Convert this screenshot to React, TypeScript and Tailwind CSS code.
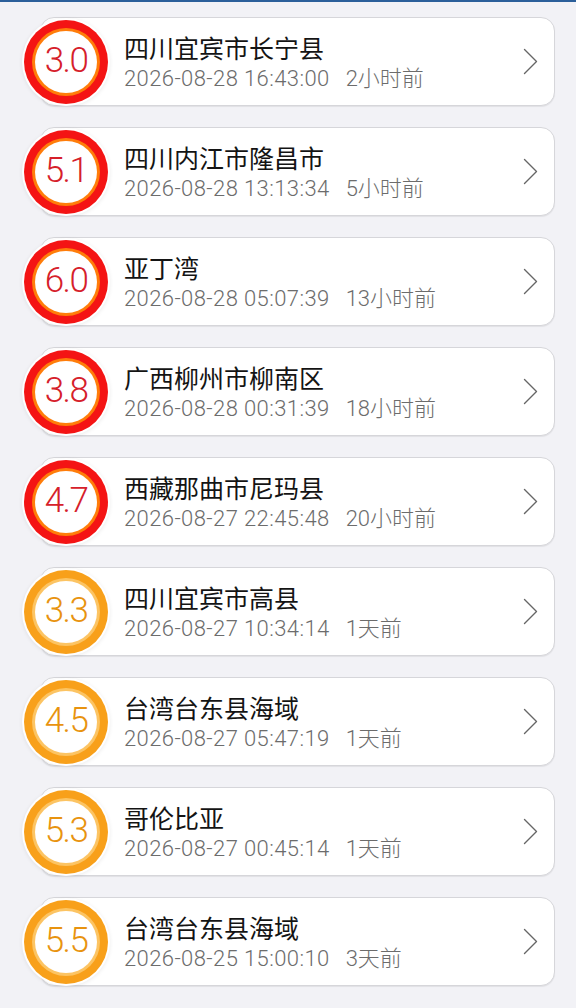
import React from "react";

type Item = { mag: string; place: string; time: string; ago: string; red: boolean };

const items: Item[] = [
  { mag: "3.0", place: "四川宜宾市长宁县", time: "2026-08-28 16:43:00", ago: "2小时前", red: true },
  { mag: "5.1", place: "四川内江市隆昌市", time: "2026-08-28 13:13:34", ago: "5小时前", red: true },
  { mag: "6.0", place: "亚丁湾", time: "2026-08-28 05:07:39", ago: "13小时前", red: true },
  { mag: "3.8", place: "广西柳州市柳南区", time: "2026-08-28 00:31:39", ago: "18小时前", red: true },
  { mag: "4.7", place: "西藏那曲市尼玛县", time: "2026-08-27 22:45:48", ago: "20小时前", red: true },
  { mag: "3.3", place: "四川宜宾市高县", time: "2026-08-27 10:34:14", ago: "1天前", red: false },
  { mag: "4.5", place: "台湾台东县海域", time: "2026-08-27 05:47:19", ago: "1天前", red: false },
  { mag: "5.3", place: "哥伦比亚", time: "2026-08-27 00:45:14", ago: "1天前", red: false },
  { mag: "5.5", place: "台湾台东县海域", time: "2026-08-25 15:00:10", ago: "3天前", red: false },
];

function Badge({ mag, red }: { mag: string; red: boolean }) {
  return (
    <div
      className={
        "relative z-10 ml-[-17px] h-[84px] w-[84px] shrink-0 self-center rounded-full p-[8px] shadow-[0_0_0_2px_rgba(255,255,255,0.95),0_1px_4px_2px_rgba(0,0,0,0.08)] " +
        (red ? "bg-[#f41414]" : "bg-[#f8a01a]")
      }
    >
      <div className={"h-full w-full rounded-full p-[3px] " + (red ? "bg-[#ff7d0a]" : "bg-[#fcc463]")}>
        <div
          className={
            "flex h-full w-full items-center justify-center rounded-full bg-white text-[35px] font-light tracking-[-1.5px] " +
            (red ? "text-[#d6202a]" : "text-[#e8930f]")
          }
          style={{ fontFamily: "Roboto, 'Noto Sans', sans-serif" }}
        >
          {mag}
        </div>
      </div>
    </div>
  );
}

function Chevron() {
  return (
    <svg width="15" height="27" viewBox="0 0 15 27" className="mr-[16px] shrink-0">
      <path d="M1.5 1.5 L13.5 13.5 L1.5 25.5" fill="none" stroke="#666" strokeWidth="1.4" strokeLinecap="round" strokeLinejoin="round" />
    </svg>
  );
}

export default function App() {
  return (
    <div className="min-h-[1008px] bg-[#f2f2f6]">
      <div className="h-[2px] bg-[#2b5f9a]" />
      <div className="flex flex-col gap-[21px] pl-[40px] pr-[21px] pt-[15px] pb-[20px]">
        {items.map((it, i) => (
          <div
            key={i}
            className="flex h-[89px] items-center rounded-[14px] border border-[#d6d6da] bg-white shadow-[0_1px_1px_rgba(0,0,0,0.07)]"
          >
            <Badge mag={it.mag} red={it.red} />
            <div className="ml-[16px] flex flex-1 flex-col self-start pt-[14px]">
              <div
                className="text-[25px] leading-[30px] text-[#141414]"
                style={{ fontFamily: "'Noto Sans CJK SC', sans-serif" }}
              >
                {it.place}
              </div>
              <div
                className="mt-[3px] flex text-[22px] font-light leading-[28px] text-[#6c6c6c]"
                style={{ fontFamily: "Roboto, 'Noto Sans CJK SC', sans-serif" }}
              >
                <span className="tracking-[0.4px]">{it.time}</span>
                <span className="ml-[16px]">{it.ago}</span>
              </div>
            </div>
            <Chevron />
          </div>
        ))}
      </div>
    </div>
  );
}
